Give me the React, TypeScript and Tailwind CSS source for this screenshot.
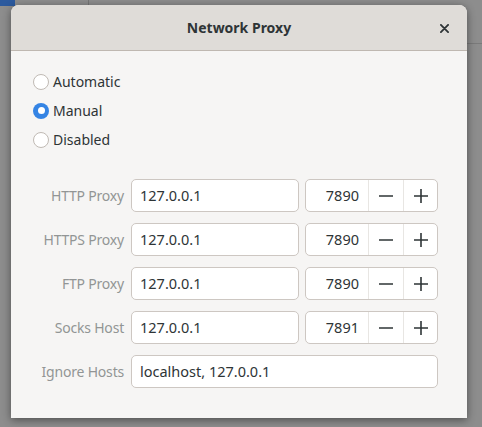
import { useState } from "react";

const font = { fontFamily: '"Noto Sans", "Open Sans", sans-serif' };

function Radio({ label, checked }: { label: string; checked?: boolean }) {
  return (
    <div className="flex h-[29px] items-center gap-[4px]">
      {checked ? (
        <span className="flex h-[16px] w-[16px] items-center justify-center rounded-full bg-[#3584e4]">
          <span className="h-[7px] w-[7px] rounded-full bg-white" />
        </span>
      ) : (
        <span className="h-[16px] w-[16px] rounded-full border border-[#c0bab4] bg-white" />
      )}
      <span className="text-[14px] text-[#2e3436]">{label}</span>
    </div>
  );
}

function ProxyRow({ label, host, port }: { label: string; host: string; port?: number }) {
  return (
    <div className="flex h-[33px] items-center">
      <div className="w-[92px] pr-[1px] text-right text-[14px] tracking-[-0.2px] text-[#929595]">{label}</div>
      <div
        className={
          "ml-[6px] flex h-full items-center rounded-[5px] border border-[#cdc7c2] bg-white px-[8px] text-[14.5px] text-[#2e3436] " +
          (port ? "w-[168px]" : "w-[307px]")
        }
      >
        {host}
      </div>
      {port && (
        <div className="ml-[6px] flex h-full w-[133px] overflow-hidden rounded-[5px] border border-[#cdc7c2] bg-white text-[#2e3436]">
          <div className="flex w-[62px] items-center justify-end pr-[9px] text-[14.5px]">{port}</div>
          <div className="flex w-[35px] items-center justify-center border-l border-[#e8e6e3]">
            <svg width="14" height="14" viewBox="0 0 14 14">
              <path d="M0 7h14" stroke="#2e3436" strokeWidth="1.6" />
            </svg>
          </div>
          <div className="flex flex-1 items-center justify-center border-l border-[#e8e6e3]">
            <svg width="14" height="14" viewBox="0 0 14 14">
              <path d="M0 7h14M7 0v14" stroke="#2e3436" strokeWidth="1.6" />
            </svg>
          </div>
        </div>
      )}
    </div>
  );
}

export default function App() {
  const [mode] = useState("manual");

  return (
    <div className="relative h-[427px] w-[482px] overflow-hidden bg-[#8d8d8d]" style={font}>
      <div className="absolute left-0 top-0 h-[6px] w-[15px] bg-[#2c5a9e]" />
      <div className="absolute left-[88px] top-0 h-[6px] w-px bg-[#767676]" />
      <div className="absolute right-0 top-[43px] h-px w-[15px] bg-[#7a7a7a]" />

      <div className="absolute left-[11px] top-[5px] flex h-[413px] w-[456px] flex-col overflow-hidden rounded-t-[8px] bg-[#f6f5f4] shadow-[0_2px_8px_rgba(0,0,0,0.45)]">
        <div className="relative flex h-[46px] shrink-0 items-center justify-center border-b border-[#bfb8b1] bg-[#dfdcd8]">
          <span className="text-[14px] font-bold text-[#2e3436]">Network Proxy</span>
          <svg className="absolute right-[18px] top-[19px]" width="9" height="9" viewBox="0 0 10 10">
            <path d="M1 1l8 8M9 1l-8 8" stroke="#2e3436" strokeWidth="2" strokeLinecap="round" />
          </svg>
        </div>

        <div className="flex flex-col pl-[22px] pt-[16px]">
          <Radio label="Automatic" checked={mode === "automatic"} />
          <Radio label="Manual" checked={mode === "manual"} />
          <Radio label="Disabled" checked={mode === "disabled"} />

          <div className="mt-[25px] flex flex-col gap-[11px]">
            <ProxyRow label="HTTP Proxy" host="127.0.0.1" port={7890} />
            <ProxyRow label="HTTPS Proxy" host="127.0.0.1" port={7890} />
            <ProxyRow label="FTP Proxy" host="127.0.0.1" port={7890} />
            <ProxyRow label="Socks Host" host="127.0.0.1" port={7891} />
            <ProxyRow label="Ignore Hosts" host="localhost, 127.0.0.1" />
          </div>
        </div>
      </div>
    </div>
  );
}
